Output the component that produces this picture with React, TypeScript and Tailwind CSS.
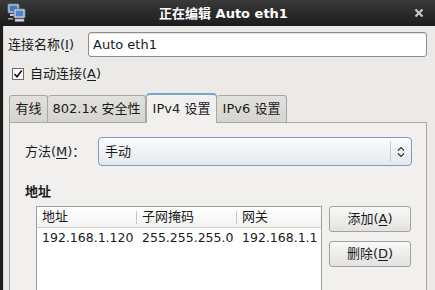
import React from "react";

const font = { fontFamily: '"DejaVu Sans","Noto Sans CJK SC",sans-serif' };

function U({ c }: { c: string }) {
  return <span className="underline underline-offset-2">{c}</span>;
}

function NetIcon() {
  return (
    <svg width="20" height="20" viewBox="0 0 20 20">
      <rect x="1" y="1" width="11" height="9" rx="1" fill="#d8dde4" stroke="#6b7480" />
      <rect x="2.5" y="2.5" width="8" height="6" fill="#3f78c2" />
      <rect x="3" y="11" width="7" height="2" fill="#c8ccd2" />
      <rect x="7" y="6" width="11" height="9" rx="1" fill="#e4e8ee" stroke="#6b7480" />
      <rect x="8.5" y="7.5" width="8" height="6" fill="#4a86d0" />
      <rect x="8" y="16" width="9" height="2.5" fill="#cfd3d8" stroke="#8a9099" strokeWidth="0.5" />
      <rect x="1" y="15" width="5" height="1.5" fill="#9aa0a8" />
    </svg>
  );
}

export default function App() {
  return (
    <div className="w-[435px] h-[290px] overflow-hidden flex flex-col text-[12px] text-[#1a1a1a]" style={font}>
      {/* title bar */}
      <div className="h-[26px] shrink-0 flex items-center bg-gradient-to-b from-[#3a3a3a] to-[#1c1c1c] pl-[7px] pr-[10px]">
        <NetIcon />
        <div className="flex-1 text-center text-white font-bold text-[13px] leading-none pl-[6px]">正在编辑 Auto eth1</div>
        <svg width="10" height="10" viewBox="0 0 10 10" className="mr-[1px]">
          <path d="M1.5 1.5 L8.5 8.5 M8.5 1.5 L1.5 8.5" stroke="#c9c9c9" strokeWidth="2.2" />
        </svg>
      </div>
      <div className="flex flex-1 min-h-0">
        <div className="w-[3px] bg-[#1e1e1e] shrink-0" />
        <div className="w-px bg-[#d6d5d3] shrink-0" />
        <div className="flex-1 bg-[#ebeae8] pl-[4px] pr-[8px] pt-[6px] flex flex-col">
          {/* name row */}
          <div className="flex items-center h-[25px]">
            <div className="w-[80px] shrink-0 text-[13px]">连接名称(<U c="I" />)</div>
            <div className="flex-1 h-[25px] rounded-[3px] border border-[#8e8c89] bg-white flex items-center pl-[4px] text-[13px] shadow-[inset_0_1px_1px_rgba(0,0,0,0.12)]">
              Auto eth1
            </div>
          </div>
          {/* checkbox row */}
          <div className="flex items-center h-[20px] mt-[7px]">
            <div className="ml-[4px] w-[12px] h-[12px] border border-[#6f6d6a] bg-white flex items-center justify-center">
              <svg width="10" height="10" viewBox="0 0 10 10">
                <path d="M1.5 5 L4 7.8 L8.8 1.5" stroke="#111" strokeWidth="1.6" fill="none" />
              </svg>
            </div>
            <div className="ml-[6px] text-[13px]">自动连接(<U c="A" />)</div>
          </div>
          {/* tabs */}
          <div className="flex items-end h-[30px] mt-[8px] ml-[1px]">
            <div className="w-[39px] h-[27px] flex items-center justify-center border border-b-0 border-[#a9a7a3] rounded-t-[3px] bg-gradient-to-b from-[#e3e1de] to-[#d6d4d0] text-[13px]">有线</div>
            <div className="w-[98px] h-[27px] flex items-center justify-center border border-b-0 border-l-0 border-[#a9a7a3] rounded-t-[3px] bg-gradient-to-b from-[#e3e1de] to-[#d6d4d0] text-[13px] whitespace-nowrap">802.1x 安全性</div>
            <div className="w-[71px] h-[30px] flex items-center justify-center border border-b-0 border-[#a9a7a3] border-t-[2px] border-t-[#7ba3d2] rounded-t-[4px] bg-[#f1f0ef] text-[13px] relative z-10 -mb-px pb-[1px] whitespace-nowrap">IPv4 设置</div>
            <div className="w-[70px] h-[27px] flex items-center justify-center border border-b-0 border-l-0 border-[#a9a7a3] rounded-t-[3px] bg-gradient-to-b from-[#e3e1de] to-[#d6d4d0] text-[13px] whitespace-nowrap">IPv6 设置</div>
          </div>
          {/* panel */}
          <div className="flex-1 ml-[1px] border border-b-0 border-[#a9a7a3] bg-[#f1f0ef] pl-[15px] pr-[14px] pt-[14px] flex flex-col">
            <div className="flex items-center h-[29px]">
              <div className="w-[73px] shrink-0 text-[13px]">方法(<U c="M" />)：</div>
              <div className="flex-1 h-[29px] rounded-[4px] border border-[#7d9bc0] bg-gradient-to-b from-[#fbfcfd] to-[#e4e9ef] flex items-center">
                <div className="flex-1 pl-[6px] text-[13px]">手动</div>
                <div className="w-px h-[21px] bg-[#c6ccd4]" />
                <div className="w-[20px] flex justify-center">
                  <svg width="8" height="12" viewBox="0 0 8 12">
                    <path d="M1 4.5 L4 1.5 L7 4.5 M1 7.5 L4 10.5 L7 7.5" stroke="#333" strokeWidth="1.2" fill="none" />
                  </svg>
                </div>
              </div>
            </div>
            <div className="mt-[18px] font-bold h-[16px] flex items-center text-[13px]">地址</div>
            <div className="flex mt-[6px] ml-[11px] flex-1">
              <div className="w-[286px] border border-b-0 border-[#9f9d9a] bg-white flex flex-col">
                <div className="h-[21px] flex items-center border-b border-[#d0cecb] bg-gradient-to-b from-[#ffffff] to-[#f3f3f2] text-[13px]">
                  <div className="w-[99px] pl-[5px]">地址</div>
                  <div className="w-px h-[13px] bg-[#c9c7c4]" />
                  <div className="w-[99px] pl-[5px]">子网掩码</div>
                  <div className="w-px h-[13px] bg-[#c9c7c4]" />
                  <div className="flex-1 pl-[5px]">网关</div>
                </div>
                <div className="h-[21px] flex items-center text-[12.5px]">
                  <div className="w-[100px] pl-[5px] whitespace-nowrap">192.168.1.120</div>
                  <div className="w-[100px] pl-[5px] whitespace-nowrap">255.255.255.0</div>
                  <div className="flex-1 pl-[5px] whitespace-nowrap">192.168.1.1</div>
                </div>
              </div>
              <div className="ml-[7px] flex flex-col gap-[9px]">
                <div className="w-[82px] h-[26px] rounded-[3px] border border-[#a3a19e] bg-gradient-to-b from-[#f9f9f8] to-[#e3e2e0] flex items-center justify-center text-[13px]">添加(<U c="A" />)</div>
                <div className="w-[82px] h-[26px] rounded-[3px] border border-[#a3a19e] bg-gradient-to-b from-[#f9f9f8] to-[#e3e2e0] flex items-center justify-center text-[13px]">删除(<U c="D" />)</div>
              </div>
            </div>
          </div>
        </div>
      </div>
    </div>
  );
}
